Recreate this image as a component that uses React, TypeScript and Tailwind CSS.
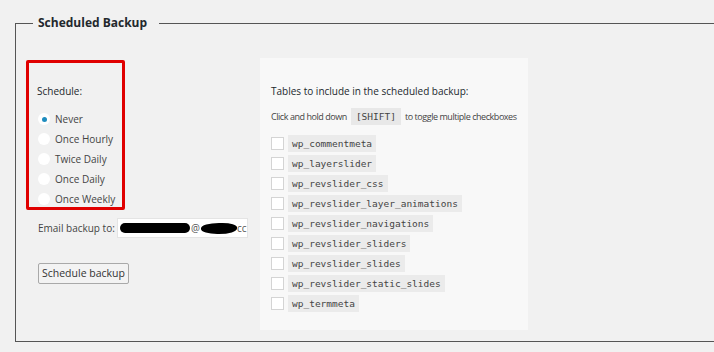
import React from "react";

const SCHEDULES = ["Never", "Once Hourly", "Twice Daily", "Once Daily", "Once Weekly"];

const TABLES = [
  "wp_commentmeta",
  "wp_layerslider",
  "wp_revslider_css",
  "wp_revslider_layer_animations",
  "wp_revslider_navigations",
  "wp_revslider_sliders",
  "wp_revslider_slides",
  "wp_revslider_static_slides",
  "wp_termmeta",
];

const sans = "font-['Open_Sans',sans-serif]";
const mono = "font-['DejaVu_Sans_Mono',monospace]";

function Radio({ label, checked }: { label: string; checked?: boolean }) {
  return (
    <label className="flex h-[20px] items-center gap-[5px]">
      <span className="grid h-[12px] w-[12px] place-items-center rounded-full bg-white">
        {checked && <span className="h-[5px] w-[5px] rounded-full bg-[#1e8cbe]" />}
      </span>
      <span className="whitespace-nowrap text-[10px] text-[#444]">{label}</span>
    </label>
  );
}

function TableRow({ name }: { name: string }) {
  return (
    <div className="flex h-[20px] items-center gap-[4px]">
      <span className="h-[13px] w-[13px] border border-[#d4d4d4] bg-white" />
      <code className={`${mono} bg-[#ebebeb] px-[4px] py-[2px] text-[9.5px] leading-[13px] text-[#444]`}>{name}</code>
    </div>
  );
}

export default function App() {
  return (
    <div className={`${sans} relative h-[352px] w-[714px] overflow-hidden bg-[#f1f1f1]`}>
      <fieldset className="ml-[15px] mt-[14px] h-[328px] w-[740px] border border-[#555]">
        <legend className="ml-[17px] pl-[5px] pr-[12px] text-[12px] font-bold leading-[18px] text-[#23282d]">
          Scheduled Backup
        </legend>

        <div className="mt-[28px] flex items-start pl-[10px]">
          <div className="w-[234px]">
            <div className="h-[150px] w-[99px] rounded-[2px] border-[3px] border-[#e00000] pl-[8px] pt-[20px]">
              <p className="text-[10px] leading-[16px] text-[#23282d]">Schedule:</p>
              <div className="mt-[10px] pl-[1px]">
                {SCHEDULES.map((s, i) => (
                  <Radio key={s} label={s} checked={i === 0} />
                ))}
              </div>
            </div>

            <div className="mt-[8px] flex items-center pl-[12px]">
              <span className="w-[79px] whitespace-nowrap text-[10px] text-[#444]">Email backup to:</span>
              <div className="flex h-[20px] w-[131px] items-center border border-[#e4e4e4] bg-white pl-[2px] text-[10px] text-[#555]">
                <span className="h-[10px] w-[70px] rounded-full bg-black" />
                <span className="ml-[1px] leading-none">@</span>
                <span className="ml-[1px] h-[11px] w-[36px] rounded-[50%_40%_50%_45%] bg-black" />
                <span className="leading-none">cc</span>
              </div>
            </div>

            <button className="ml-[12px] mt-[25px] h-[21px] whitespace-nowrap rounded-[2px] border border-[#a9a9a9] bg-[#f3f3f3] px-[3px] text-[10.5px] leading-none text-[#333]">
              Schedule backup
            </button>
          </div>

          <div className="-mt-[2px] h-[272px] w-[268px] bg-[#f8f8f8] pl-[11px] pt-[25px]">
            <p className="whitespace-nowrap text-[10px] leading-[16px] text-[#23282d]">Tables to include in the scheduled backup:</p>
            <p className="mt-[9px] flex items-center whitespace-nowrap text-[9px] tracking-[-0.45px] text-[#444]">
              Click and hold down
              <code className={`${mono} mx-[4px] bg-[#e8e8e8] px-[5px] py-[2px] text-[9.5px] leading-[13px] tracking-normal`}>[SHIFT]</code>
              to toggle multiple checkboxes
            </p>
            <div className="mt-[8px]">
              {TABLES.map((t) => (
                <TableRow key={t} name={t} />
              ))}
            </div>
          </div>
        </div>
      </fieldset>
    </div>
  );
}
